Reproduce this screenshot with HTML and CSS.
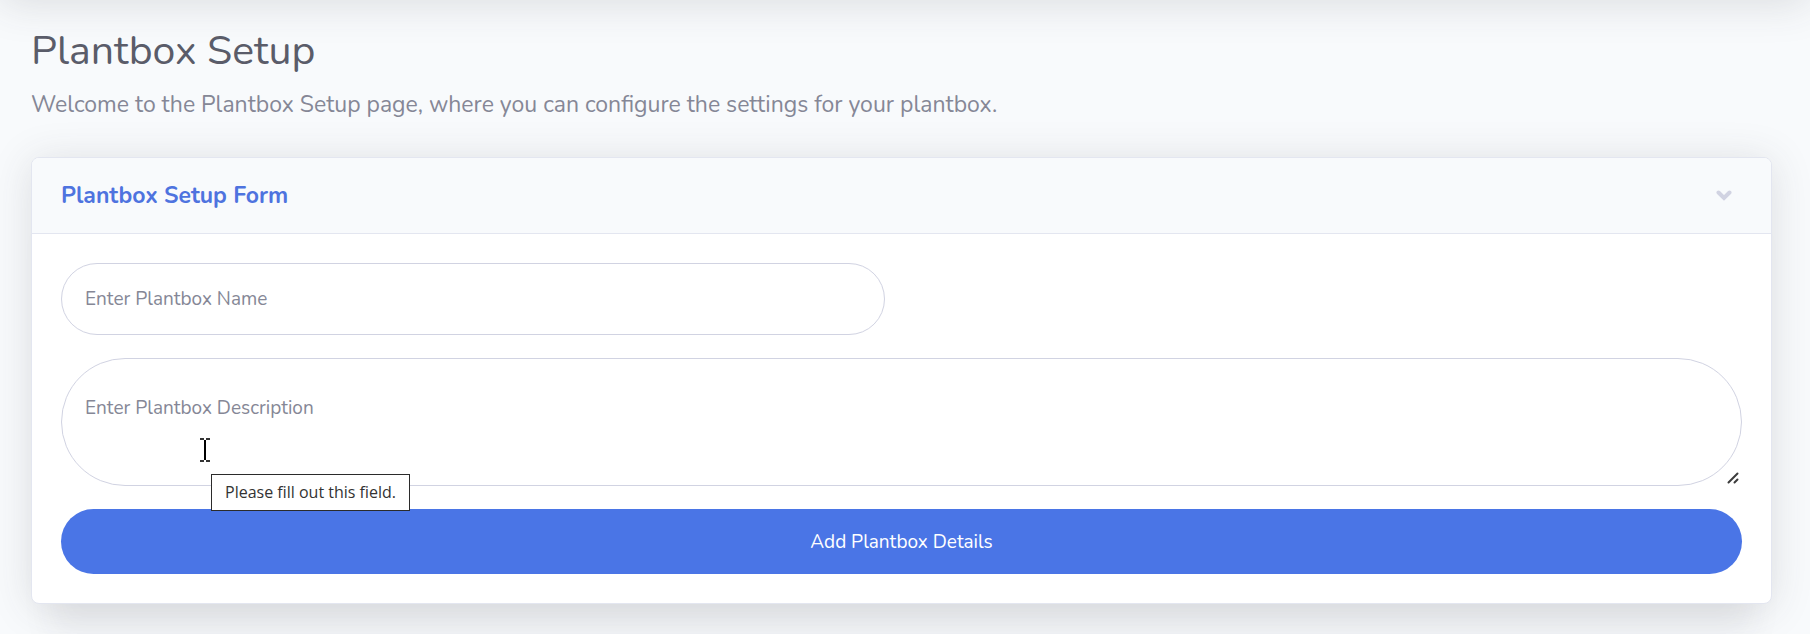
FILE: index.html
```html
<!DOCTYPE html>
<html lang="en">
<head>
<meta charset="utf-8">
<meta name="viewport" content="width=device-width, initial-scale=1">
<title>Plantbox Setup</title>
<link rel="stylesheet" href="styles.css">
</head>
<body>
<div class="topbar"></div>
<main class="page">
  <h1 class="page-title">Plantbox Setup</h1>
  <p class="page-intro">Welcome to the Plantbox Setup page, where you can configure the settings for your plantbox.</p>
  <section class="card">
    <header class="card-header">
      <h2 class="card-title">Plantbox Setup Form</h2>
      <button class="card-toggle" type="button" aria-label="Collapse form">
        <svg width="16" height="12" viewBox="0 0 16 12" aria-hidden="true"><path d="M2.500 2.500l5.500 5.500L13.500 2.500" fill="none" stroke="currentColor" stroke-width="4" stroke-linecap="round"/></svg>
      </button>
    </header>
    <form class="card-body">
      <div class="row">
        <input class="field" type="text" placeholder="Enter Plantbox Name" aria-label="Plantbox name" required>
      </div>
      <div class="description">
        <textarea class="field field-area" placeholder="Enter Plantbox Description" aria-label="Plantbox description" required></textarea>
        <svg class="grip" width="12" height="12" viewBox="0 0 12 12" aria-hidden="true"><path d="M1.500 10.500l9-9M7.500 10.500l3-3" fill="none" stroke="#3c3c3c" stroke-width="2" stroke-linecap="round"/></svg>
        <svg class="caret" width="10" height="24" viewBox="0 0 10 24" aria-hidden="true"><path d="M0 1h4M6 1h4M0 23h4M6 23h4" stroke="#333" stroke-width="2"/><path d="M5 2v20" stroke="#000" stroke-width="2"/></svg>
        <span class="tooltip" role="tooltip">Please fill out this field.</span>
      </div>
      <button class="submit" type="submit">Add Plantbox Details</button>
    </form>
  </section>
</main>
</body>
</html>
```
FILE: styles.css
```css
* {
  box-sizing: border-box;
}

body {
  margin: 0;
  overflow-x: hidden;
  background: #f8fafc;
  color: #858796;
  font-family: Nunito, "Noto Sans", sans-serif;
  font-size: 23px;
  line-height: 36px;
}

.topbar {
  height: 80px;
  margin-top: -80px;
  background: #fff;
  box-shadow: 0 4px 42px rgba(58, 59, 69, 0.15);
}

.page {
  padding: 26px 38px 30px 31px;
}

.page-title {
  margin: 0 0 11px;
  color: #5a5c69;
  font-size: 41px;
  font-weight: 400;
  line-height: 50px;
}

.page-intro {
  margin: 0 0 34px;
}

.card {
  border: 1px solid #e3e6f0;
  border-radius: 8px;
  background: #fff;
  box-shadow: 0 4px 42px rgba(58, 59, 69, 0.15), 0 52px 32px -20px rgba(58, 59, 69, 0.06);
}

.card-header {
  display: flex;
  align-items: center;
  justify-content: space-between;
  padding: 20px 39px 19px 29px;
  border-bottom: 1px solid #e3e6f0;
  border-radius: 7px 7px 0 0;
  background: #f8fafc;
}

.card-title {
  margin: 0;
  color: #4e73df;
  font-size: 23px;
  font-weight: 700;
}

.card-toggle {
  display: flex;
  padding: 0;
  border: 0;
  background: none;
  color: #d1d3e2;
}

.card-body {
  display: flex;
  flex-direction: column;
  gap: 23px;
  padding: 29px;
}

.row {
  display: grid;
  grid-template-columns: 1fr 1fr;
  gap: 34px;
}

.field {
  display: block;
  width: 100%;
  height: 72px;
  padding: 0 23px;
  border: 1px solid #d1d3e2;
  border-radius: 64px;
  background: #fff;
  color: #6e707e;
  font-family: inherit;
  font-size: 19px;
  line-height: 28px;
}

.field::placeholder {
  color: #858796;
  opacity: 1;
}

.field-area {
  height: 128px;
  padding-top: 35px;
  overflow: hidden;
  resize: none;
}

.description {
  position: relative;
}

.grip {
  position: absolute;
  right: 3px;
  bottom: 2px;
}

.caret {
  position: absolute;
  top: 80px;
  left: 139px;
}

.tooltip {
  position: absolute;
  top: 116px;
  left: 150px;
  padding: 0 13px;
  border: 1px solid #2b2b2b;
  background: #fff;
  color: #333;
  font-family: "Segoe UI", "Open Sans", sans-serif;
  font-size: 16px;
  line-height: 35px;
  white-space: nowrap;
}

.submit {
  height: 65px;
  padding: 0 24px;
  border: 0;
  border-radius: 33px;
  background: #4a75e6;
  color: #fff;
  font-family: inherit;
  font-size: 19px;
}
```
